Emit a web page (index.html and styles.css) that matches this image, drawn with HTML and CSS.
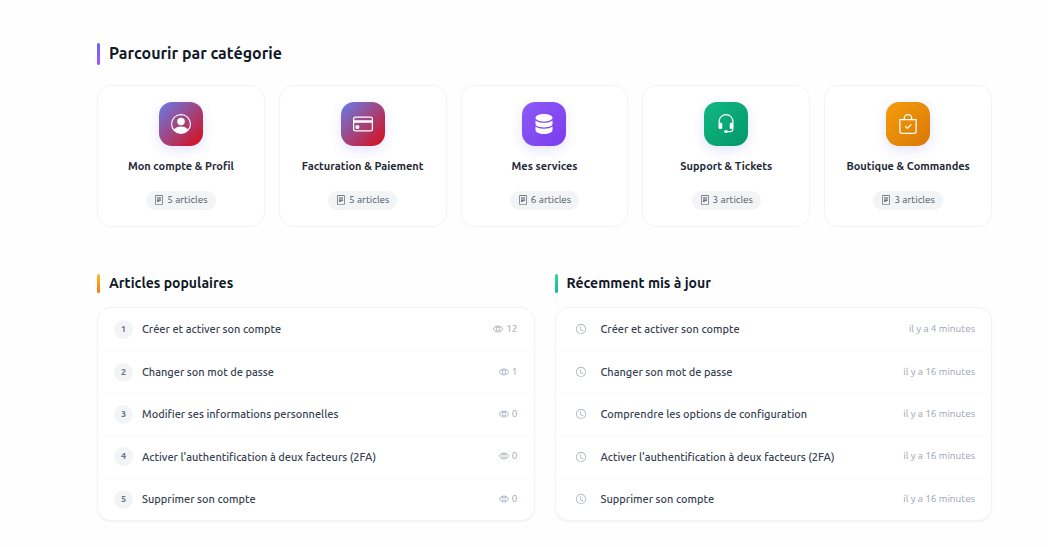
FILE: index.html
```html
<!DOCTYPE html>
<html lang="fr">
  <head>
    <meta charset="UTF-8" />
    <meta name="viewport" content="width=device-width, initial-scale=1.0" />
    <title>Centre d'aide</title>
    <link rel="stylesheet" href="styles.css">
  </head>
  <body>
    <svg class="sprite" aria-hidden="true">
      <symbol id="person" viewBox="0 0 16 16">
        <path d="M11 6a3 3 0 1 1-6 0 3 3 0 0 1 6 0"/>
        <path fill-rule="evenodd" d="M0 8a8 8 0 1 1 16 0A8 8 0 0 1 0 8m8-7a7 7 0 0 0-5.468 11.37C3.242 11.226 4.805 10 8 10s4.757 1.225 5.468 2.37A7 7 0 0 0 8 1"/>
      </symbol>
      <symbol id="card" viewBox="0 0 16 16">
        <path d="M0 4a2 2 0 0 1 2-2h12a2 2 0 0 1 2 2v8a2 2 0 0 1-2 2H2a2 2 0 0 1-2-2zm2-1a1 1 0 0 0-1 1v1h14V4a1 1 0 0 0-1-1zm13 4H1v5a1 1 0 0 0 1 1h12a1 1 0 0 0 1-1z"/>
        <path d="M2 10a1 1 0 0 1 1-1h1a1 1 0 0 1 1 1v1a1 1 0 0 1-1 1H3a1 1 0 0 1-1-1z"/>
      </symbol>
      <symbol id="database" viewBox="0 0 16 16">
        <path d="M8 0C4.300 0 1.200 1.300 1.200 3S4.300 6 8 6s6.800-1.300 6.800-3S11.700 0 8 0"/>
        <path d="M1.200 5.100v2.900c0 1.500 2.900 2.700 6.800 2.700s6.800-1.200 6.800-2.700V5.100C13.300 6.400 10.800 7 8 7s-5.300-.6-6.800-1.900"/>
        <path d="M1.200 10v3c0 1.700 3.100 3 6.800 3s6.800-1.300 6.800-3v-3c-1.500 1.200-4 1.700-6.800 1.700S2.700 11.200 1.200 10"/>
      </symbol>
      <symbol id="headset" viewBox="0 0 16 16">
        <path d="M8 1a5 5 0 0 0-5 5v1h1a1 1 0 0 1 1 1v3a1 1 0 0 1-1 1H3a1 1 0 0 1-1-1V6a6 6 0 1 1 12 0v6a2.500 2.500 0 0 1-2.500 2.500H9.366a1 1 0 0 1-.866.500h-1a1 1 0 1 1 0-2h1a1 1 0 0 1 .866.500H11.500A1.500 1.500 0 0 0 13 12h-1a1 1 0 0 1-1-1V8a1 1 0 0 1 1-1h1V6a5 5 0 0 0-5-5"/>
      </symbol>
      <symbol id="bag" viewBox="0 0 16 16">
        <path fill-rule="evenodd" d="M10.854 8.146a.5.5 0 0 1 0 .708l-3 3a.5.5 0 0 1-.708 0l-1.500-1.500a.5.5 0 0 1 .708-.708L7.500 10.793l2.646-2.647a.5.5 0 0 1 .708 0"/>
        <path d="M8 1a2.500 2.500 0 0 1 2.500 2.500V4h-5v-.5A2.500 2.500 0 0 1 8 1m3.500 3v-.5a3.500 3.500 0 1 0-7 0V4H1v10a2 2 0 0 0 2 2h10a2 2 0 0 0 2-2V4zM2 5h12v9a1 1 0 0 1-1 1H3a1 1 0 0 1-1-1z"/>
      </symbol>
      <symbol id="file" viewBox="0 0 16 16">
        <path d="M5 4a.5.5 0 0 0 0 1h6a.5.5 0 0 0 0-1zm-.5 2.500A.5.5 0 0 1 5 6h6a.5.5 0 0 1 0 1H5a.5.5 0 0 1-.5-.5M5 8a.5.5 0 0 0 0 1h6a.5.5 0 0 0 0-1zm0 2a.5.5 0 0 0 0 1h3a.5.5 0 0 0 0-1z"/>
        <path d="M2 2a2 2 0 0 1 2-2h8a2 2 0 0 1 2 2v12a2 2 0 0 1-2 2H4a2 2 0 0 1-2-2zm10-1H4a1 1 0 0 0-1 1v12a1 1 0 0 0 1 1h8a1 1 0 0 0 1-1V2a1 1 0 0 0-1-1"/>
      </symbol>
      <symbol id="eye" viewBox="0 0 16 16">
        <path d="M16 8s-3-5.500-8-5.500S0 8 0 8s3 5.500 8 5.500S16 8 16 8M1.173 8a13 13 0 0 1 1.660-2.043C4.120 4.668 5.880 3.500 8 3.500s3.879 1.168 5.168 2.457A13 13 0 0 1 14.828 8a13 13 0 0 1-1.660 2.043C11.879 11.332 10.119 12.500 8 12.500s-3.879-1.168-5.168-2.457A13 13 0 0 1 1.172 8z"/>
        <path d="M8 5.500a2.500 2.500 0 1 0 0 5 2.500 2.500 0 0 0 0-5M4.500 8a3.500 3.500 0 1 1 7 0 3.500 3.500 0 0 1-7 0"/>
      </symbol>
      <symbol id="clock" viewBox="0 0 16 16">
        <path d="M8 3.500a.5.5 0 0 0-1 0V9a.5.5 0 0 0 .252.434l3.500 2a.5.5 0 0 0 .496-.868L8 8.710z"/>
        <path d="M8 16A8 8 0 1 0 8 0a8 8 0 0 0 0 16m7-8A7 7 0 1 1 1 8a7 7 0 0 1 14 0"/>
      </symbol>
    </svg>

    <main class="container">
      <section class="categories">
        <h1 class="title">Parcourir par catégorie</h1>
        <div class="category-grid">
          <a href="#" class="category">
            <span class="category-icon"><svg><use href="#person"/></svg></span>
            <span class="category-name">Mon compte &amp; Profil</span>
            <span class="count"><svg><use href="#file"/></svg>5 articles</span>
          </a>
          <a href="#" class="category">
            <span class="category-icon"><svg><use href="#card"/></svg></span>
            <span class="category-name">Facturation &amp; Paiement</span>
            <span class="count"><svg><use href="#file"/></svg>5 articles</span>
          </a>
          <a href="#" class="category">
            <span class="category-icon purple"><svg><use href="#database"/></svg></span>
            <span class="category-name">Mes services</span>
            <span class="count"><svg><use href="#file"/></svg>6 articles</span>
          </a>
          <a href="#" class="category">
            <span class="category-icon green"><svg><use href="#headset"/></svg></span>
            <span class="category-name">Support &amp; Tickets</span>
            <span class="count"><svg><use href="#file"/></svg>3 articles</span>
          </a>
          <a href="#" class="category">
            <span class="category-icon orange"><svg><use href="#bag"/></svg></span>
            <span class="category-name">Boutique &amp; Commandes</span>
            <span class="count"><svg><use href="#file"/></svg>3 articles</span>
          </a>
        </div>
      </section>

      <div class="columns">
        <section>
          <h2 class="title popular">Articles populaires</h2>
          <div class="list">
            <a href="#" class="row"><span class="rank">1</span><span class="name">Créer et activer son compte</span><span class="meta"><svg><use href="#eye"/></svg>12</span></a>
            <a href="#" class="row"><span class="rank">2</span><span class="name">Changer son mot de passe</span><span class="meta"><svg><use href="#eye"/></svg>1</span></a>
            <a href="#" class="row"><span class="rank">3</span><span class="name">Modifier ses informations personnelles</span><span class="meta"><svg><use href="#eye"/></svg>0</span></a>
            <a href="#" class="row"><span class="rank">4</span><span class="name">Activer l'authentification à deux facteurs (2FA)</span><span class="meta"><svg><use href="#eye"/></svg>0</span></a>
            <a href="#" class="row"><span class="rank">5</span><span class="name">Supprimer son compte</span><span class="meta"><svg><use href="#eye"/></svg>0</span></a>
          </div>
        </section>
        <section>
          <h2 class="title recent">Récemment mis à jour</h2>
          <div class="list">
            <a href="#" class="row"><svg class="clock"><use href="#clock"/></svg><span class="name">Créer et activer son compte</span><span class="meta">il y a 4 minutes</span></a>
            <a href="#" class="row"><svg class="clock"><use href="#clock"/></svg><span class="name">Changer son mot de passe</span><span class="meta">il y a 16 minutes</span></a>
            <a href="#" class="row"><svg class="clock"><use href="#clock"/></svg><span class="name">Comprendre les options de configuration</span><span class="meta">il y a 16 minutes</span></a>
            <a href="#" class="row"><svg class="clock"><use href="#clock"/></svg><span class="name">Activer l'authentification à deux facteurs (2FA)</span><span class="meta">il y a 16 minutes</span></a>
            <a href="#" class="row"><svg class="clock"><use href="#clock"/></svg><span class="name">Supprimer son compte</span><span class="meta">il y a 16 minutes</span></a>
          </div>
        </section>
      </div>
    </main>
  </body>
</html>
```

FILE: styles.css
```css
* {
  box-sizing: border-box;
}

body {
  margin: 0;
  font-family: Ubuntu, "Noto Sans", sans-serif;
  font-size: 11px;
  line-height: 16px;
  color: #1f2937;
  background: #fefefe;
}

a {
  color: inherit;
  text-decoration: none;
}

svg {
  fill: currentColor;
  flex-shrink: 0;
}

.sprite {
  display: none;
}

.container {
  padding: 42px 56px 26px 97px;
}

.title {
  display: flex;
  align-items: center;
  gap: 9px;
  margin: 0 0 20px;
  font-size: 16px;
  font-weight: 600;
  line-height: 23px;
  color: #111827;
}

.title::before {
  content: "";
  width: 3px;
  height: 22px;
  border-radius: 2px;
  background: linear-gradient(#6366f1, #a855f7);
}

.popular,
.recent {
  margin-bottom: 14px;
  font-size: 14px;
  line-height: 19px;
}

.popular::before,
.recent::before {
  height: 19px;
}

.popular::before {
  background: linear-gradient(#fbbf24, #f97316);
}

.recent::before {
  background: linear-gradient(#34d399, #14b8a6);
}

/* categories */
.category-grid {
  display: grid;
  grid-template-columns: repeat(5, 1fr);
  gap: 14px;
}

.category {
  display: flex;
  flex-direction: column;
  align-items: center;
  padding: 16px 8px;
  background: #fff;
  border: 1px solid #f3f4f6;
  border-radius: 14px;
}

.category-icon {
  display: flex;
  align-items: center;
  justify-content: center;
  width: 44px;
  height: 44px;
  margin-bottom: 12px;
  border-radius: 13px;
  color: #fff;
  background: linear-gradient(135deg, #667eea, #dc0a14);
  box-shadow: 0 4px 12px rgba(99, 102, 241, 0.18);
}

.category-icon svg {
  width: 20px;
  height: 20px;
}

.purple {
  background: linear-gradient(135deg, #8b5cf6, #7c3aed);
}

.green {
  background: linear-gradient(135deg, #10b981, #059669);
}

.orange {
  background: linear-gradient(135deg, #f59e0b, #d97706);
}

.category-name {
  margin-bottom: 17px;
  font-weight: 600;
}

.count {
  display: flex;
  align-items: center;
  gap: 3px;
  height: 19px;
  padding: 0 8px 2px;
  border-radius: 10px;
  font-size: 10px;
  color: #4b5563;
  background: #f3f4f6;
}

.count svg {
  width: 10px;
  height: 10px;
}

/* article lists */
.columns {
  display: grid;
  grid-template-columns: 1fr 1fr;
  gap: 20px;
  margin-top: 47px;
}

.list {
  display: grid;
  grid-auto-rows: 1fr;
  min-height: 214px;
  background: #fff;
  border: 1px solid #f3f4f6;
  border-radius: 14px;
  box-shadow: 0 1px 2px rgba(0, 0, 0, 0.05);
}

.row {
  display: flex;
  align-items: center;
  padding: 0 16px;
}

.row + .row {
  border-top: 1px solid #f9fafb;
}

.rank {
  width: 19px;
  margin-right: 9px;
  border-radius: 50%;
  font-size: 9px;
  font-weight: 600;
  line-height: 19px;
  text-align: center;
  color: #6b7280;
  background: #f3f4f6;
}

.name {
  flex: 1;
  font-weight: 500;
  color: #374151;
}

.meta {
  display: flex;
  align-items: center;
  gap: 3px;
  padding-bottom: 1px;
  font-size: 10px;
  color: #9ca3af;
}

.meta svg {
  width: 10px;
  height: 10px;
}

.clock {
  width: 10px;
  height: 10px;
  margin: 0 15px 0 4px;
  color: #9ca3af;
}
```
